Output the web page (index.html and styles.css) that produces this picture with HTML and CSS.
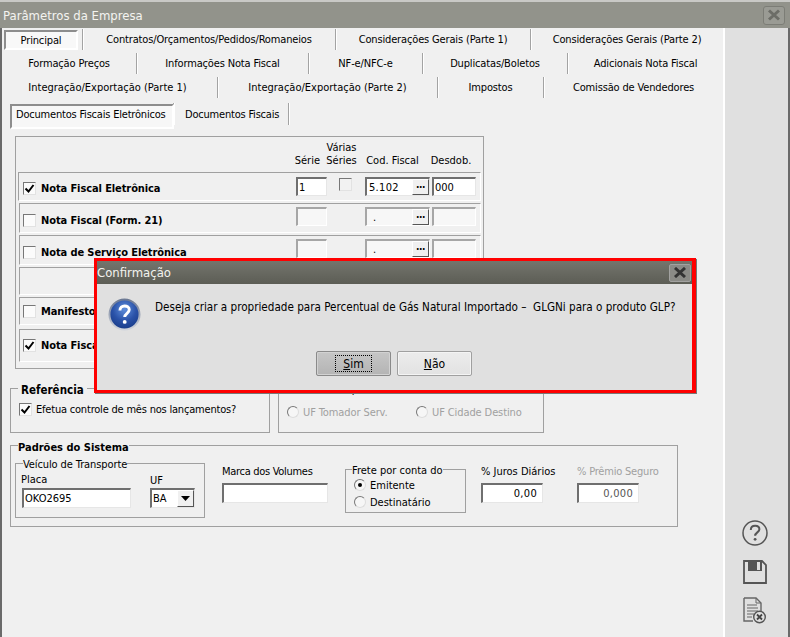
FILE: index.html
```html
<!DOCTYPE html>
<html lang="pt-BR">
<head>
<meta charset="utf-8">
<title>Parâmetros da Empresa</title>
<link rel="stylesheet" href="styles.css">
</head>
<body>
<div class="app">
  <div class="topline"></div>
  <header class="titlebar">
    <span class="title">Parâmetros da Empresa</span>
    <span class="winclose"><svg width="14" height="12" viewBox="0 0 14 12"><path d="M2 1.500l10 9M12 1.500l-10 9" stroke="#6c6d67" stroke-width="3" fill="none"/></svg></span>
  </header>
  <div class="main">
    <div class="content">
      <nav class="tabrow r1">
        <div class="tab on"><span>Principal</span></div>
        <div class="tab">Contratos/Orçamentos/Pedidos/Romaneios</div>
        <div class="tab">Considerações Gerais (Parte 1)</div>
        <div class="tab">Considerações Gerais (Parte 2)</div>
      </nav>
      <nav class="tabrow r2">
        <div class="tab">Formação Preços</div>
        <div class="tab">Informações Nota Fiscal</div>
        <div class="tab">NF-e/NFC-e</div>
        <div class="tab">Duplicatas/Boletos</div>
        <div class="tab">Adicionais Nota Fiscal</div>
      </nav>
      <nav class="tabrow r3">
        <div class="tab">Integração/Exportação (Parte 1)</div>
        <div class="tab">Integração/Exportação (Parte 2)</div>
        <div class="tab">Impostos</div>
        <div class="tab">Comissão de Vendedores</div>
      </nav>
      <nav class="subtabs">
        <div class="subtab on">Documentos Fiscais Eletrônicos</div>
        <div class="subtab plain">Documentos Fiscais</div>
      </nav>

      <section class="docs">
        <div class="dochead">
          <span class="h-serie">Série</span>
          <span class="h-varias">Várias<br>Séries</span>
          <span class="h-cod">Cod. Fiscal</span>
          <span class="h-des">Desdob.</span>
        </div>
        <div class="docrow first">
          <span class="check"><svg width="11" height="11" viewBox="0 0 11 11"><path d="M1.500 5.500l3 3 5-6.500" stroke="#000" stroke-width="2" fill="none"/></svg></span>
          <b class="doclabel">Nota Fiscal Eletrônica</b>
          <span class="field active">1</span>
          <span class="gap"></span>
          <span class="check small"></span>
          <span class="gap"></span>
          <span class="field active cod">5.102<i class="dots">···</i></span>
          <span class="gap"></span>
          <span class="field active">000</span>
        </div>
        <div class="docrow tall">
          <span class="check"></span>
          <b class="doclabel">Nota Fiscal (Form. 21)</b>
          <span class="field"></span>
          <span class="gap"></span>
          <span class="gap"></span>
          <span class="gap"></span>
          <span class="field cod"><em>.</em><i class="dots">···</i></span>
          <span class="gap"></span>
          <span class="field"></span>
        </div>
        <div class="docrow tall">
          <span class="check"></span>
          <b class="doclabel">Nota de Serviço Eletrônica</b>
          <span class="field"></span>
          <span class="gap"></span>
          <span class="gap"></span>
          <span class="gap"></span>
          <span class="field cod"><em>.</em><i class="dots">···</i></span>
          <span class="gap"></span>
          <span class="field"></span>
        </div>
        <div class="docrow blank"></div>
        <div class="docrow plainrow">
          <span class="check"></span>
          <b class="doclabel">Manifesto Eletrônico</b>
        </div>
        <div class="docrow last">
          <span class="check"><svg width="11" height="11" viewBox="0 0 11 11"><path d="M1.500 5.500l3 3 5-6.500" stroke="#000" stroke-width="2" fill="none"/></svg></span>
          <b class="doclabel">Nota Fiscal de Consumidor</b>
        </div>
      </section>

      <div class="midrow">
        <fieldset class="ref">
          <legend>Referência</legend>
          <label class="refline"><span class="check"><svg width="11" height="11" viewBox="0 0 11 11"><path d="M1.500 5.500l3 3 5-6.500" stroke="#000" stroke-width="2" fill="none"/></svg></span>Efetua controle de mês nos lançamentos?</label>
        </fieldset>
        <fieldset class="ufgroup">
          <legend>Local de Imposto</legend>
          <div class="ufline">
            <label class="opt dim"><span class="radio"></span>UF Tomador Serv.</label>
            <label class="opt dim"><span class="radio"></span>UF Cidade Destino</label>
          </div>
        </fieldset>
      </div>

      <fieldset class="padroes">
        <legend>Padrões do Sistema</legend>
        <div class="padrow">
          <fieldset class="veiculo">
            <legend>Veículo de Transporte</legend>
            <div class="vrow">
              <div class="vplaca"><span class="lbl">Placa</span><span class="field active placa">OKO2695</span></div>
              <div class="vuf"><span class="lbl">UF</span><span class="field active uf">BA<i class="drop"><svg width="9" height="5" viewBox="0 0 9 5"><path d="M0 0h9L4.500 5z" fill="#000"/></svg></i></span></div>
            </div>
          </fieldset>
          <div class="stack marca"><span class="lbl">Marca dos Volumes</span><span class="field active wide"></span></div>
          <fieldset class="frete">
            <legend>Frete por conta do</legend>
            <label class="opt o1"><span class="radio sel"></span>Emitente</label>
            <label class="opt o2"><span class="radio"></span>Destinatário</label>
          </fieldset>
          <div class="stack juros"><span class="lbl">% Juros Diários</span><span class="field active num">0,00</span></div>
          <div class="stack premio"><span class="lbl dimtext">% Prêmio Seguro</span><span class="field active num dimnum">0,000</span></div>
        </div>
      </fieldset>
    </div>
    <aside class="side">
      <svg class="ic-help" width="28" height="28" viewBox="0 0 28 28"><circle cx="14" cy="14" r="12" fill="none" stroke="#555" stroke-width="1.500"/><path d="M9.800 11c0-2.800 2-4.300 4.400-4.300s4.200 1.500 4.200 3.600c0 3-4.300 3.200-4.300 6.500" fill="none" stroke="#555" stroke-width="2"/><circle cx="14.100" cy="20.300" r="1.400" fill="#555"/></svg>
      <svg class="ic-save" width="26" height="26" viewBox="0 0 26 26"><path d="M2 2h18l4 4v18H2z" fill="none" stroke="#555" stroke-width="1.800"/><rect x="6" y="2" width="14" height="10" fill="#555"/><rect x="15" y="3" width="3" height="8" fill="#e0e0e0"/></svg>
      <svg class="ic-doc" width="26" height="28" viewBox="0 0 26 28"><path d="M2 1h12l5 5v10M2 1v23h9" fill="none" stroke="#666" stroke-width="1.400"/><path d="M5 8h10M5 11h11M5 14h11M5 17h7M5 20h5" stroke="#666" stroke-width="1.200"/><path d="M14 1v5h5" fill="none" stroke="#666"/><circle cx="17.500" cy="20" r="5.800" fill="#e0e0e0" stroke="#555" stroke-width="1.400"/><path d="M15 17.500l5 5M20 17.500l-5 5" stroke="#444" stroke-width="1.800"/></svg>
    </aside>
  </div>

  <div class="dialog">
    <div class="dlgtitle">
      <span class="dlgtext">Confirmação</span>
      <span class="dlgclose"><svg width="14" height="11" viewBox="0 0 14 11"><path d="M2 1l10 9M12 1l-10 9" stroke="#333" stroke-width="3" fill="none"/></svg></span>
    </div>
    <div class="dlgbody">
      <div class="dlgmsg">
        <svg class="qicon" width="33" height="33" viewBox="0 0 34 34">
          <defs>
            <radialGradient id="qb" cx="50%" cy="32%" r="70%"><stop offset="0" stop-color="#5f8fdc"/><stop offset="0.55" stop-color="#2a52a8"/><stop offset="1" stop-color="#173a86"/></radialGradient>
            <linearGradient id="qr" x1="0" y1="0" x2="0" y2="1"><stop offset="0" stop-color="#6d7a94"/><stop offset="1" stop-color="#d0d4dc"/></linearGradient>
          </defs>
          <circle cx="17" cy="17" r="15.500" fill="url(#qb)" stroke="url(#qr)" stroke-width="2"/>
          <path d="M12.300 13c0-3.200 2.200-4.800 4.800-4.800s4.800 1.500 4.800 4c0 3.600-4.700 3.600-4.700 7.500" fill="none" stroke="#fff" stroke-width="3"/>
          <circle cx="17.200" cy="24.600" r="2" fill="#fff"/>
        </svg>
        <p>Deseja criar a propriedade para Percentual de Gás Natural Importado –&nbsp; GLGNi para o produto GLP?</p>
      </div>
      <div class="dlgbtns">
        <button class="btn def" type="button"><span><u>S</u>im</span></button>
        <button class="btn" type="button"><span><u>N</u>ão</span></button>
      </div>
    </div>
  </div>
</div>
</body>
</html>
```
FILE: styles.css
```css
* { box-sizing: border-box; }
html, body { margin: 0; padding: 0; }
body {
  width: 790px;
  height: 637px;
  overflow: hidden;
  font-family: "DejaVu Sans Condensed", "DejaVu Sans", sans-serif;
  font-size: 11px;
  color: #000;
  background: #f0f0f0;
}
.app { position: relative; width: 790px; height: 637px; display: flex; flex-direction: column; overflow: hidden; }
.topline { height: 2px; background: #c9c9c6; flex: none; }
.titlebar {
  height: 26px; flex: none; background: #92938b; display: flex; align-items: center;
  justify-content: space-between; padding: 0 5px 0 3px; color: #f4f4f0;
}
.title { font-size: 13px; }
.winclose {
  width: 22px; height: 19px; border: 1px solid #7c7d76; border-radius: 3px; background: #9a9b94;
  display: flex; align-items: center; justify-content: center;
}
.main {
  flex: 1; display: flex; border-left: 2px solid #6a6a6a; border-right: 2px solid #6a6a6a; min-height: 0;
}
.content { width: 722px; flex: none; background: #f0f0f0; border-right: 1px solid #fff; }
.side { flex: 1; background: #e0e0e0; border-left: 1px solid #fff; display: flex; flex-direction: column; align-items: center; padding: 491px 4px 0 0; }
.ic-save { margin-top: 12px; }
.ic-doc { margin-top: 12px; }

.tabrow { display: grid; height: 24px; padding-top: 1px; }
.r1 { grid-template-columns: 81px 253px 195px 192px; }
.r2 { grid-template-columns: 135px 172px 114px 145px 155px; }
.r3 { grid-template-columns: 216px 220px 106px 179px; }
.tab {
  height: 21px; display: flex; align-items: center; justify-content: center; letter-spacing: -0.15px;
  border-right: 1px solid #a3a3a3; box-shadow: 1px 0 0 #fff; white-space: nowrap;
}
.r3 .tab:nth-child(-n+2) { letter-spacing: 0; }
.r3 .tab:first-child { padding-right: 4px; }
.tab:last-child { border-right: 0; box-shadow: none; }
.tab.on { padding: 1px 4px 0 2px; }
.tab.on span {
  display: flex; align-items: center; justify-content: center; width: 74px; height: 20px; padding-top: 1px;
  background: #f8f8f8; border: 2px solid; border-color: #8d8d8d #fff #fff #8d8d8d;
}

.subtabs { display: flex; height: 22px; margin-top: 3px; padding-left: 8px; }
.subtab { display: flex; align-items: center; white-space: nowrap; border-right: 1px solid #a3a3a3; box-shadow: 1px 0 0 #fff; letter-spacing: -0.2px; }
.subtab.on { width: 164px; padding: 1px 0 0 6px; position: relative; isolation: isolate; }
.subtab.plain { width: 115px; padding-left: 11px; }
.subtab.on::before {
  content: ""; position: absolute; left: 0; top: 1px; width: 160px; height: 21px; background: #f7f7f7;
  border: 2px solid; border-color: #8d8d8d #fff #fff #8d8d8d; z-index: -1;
}

.docs {
  margin: 11px 0 0 13px; width: 469px; height: 233px; border: 1px solid #a0a0a0; padding: 0 2px 0 3px;
}
.dochead { height: 35px; display: grid; grid-template-columns: 255px 31px 37px 65px 4px 44px; padding-left: 18px; align-items: end; text-align: center; line-height: 13px; padding-bottom: 5px; }
.h-serie { grid-column: 1 / 3; text-align: right; padding-right: 3px; }
.h-varias { grid-column: 3; }
.h-cod { grid-column: 4; }
.h-des { grid-column: 6; }
.dochead span { white-space: nowrap; }
.docrow {
  height: 29px; margin-bottom: 2px; border: 1px solid #a0a0a0; border-right-color: #fff; border-bottom-color: #fff;
  display: grid; grid-template-columns: 18px 255px 31px 12px 13px 13px 65px 2px 44px; padding-left: 3px; align-items: center;
}
.docrow.first { margin-left: -1px; padding-left: 4px; }
.docrow.tall { height: 30px; }
.docrow.tall .field { margin-bottom: 3px; }
.docrow.first > .check:first-child, .docrow.first .doclabel,
.docrow.tall .check, .docrow.tall .doclabel { margin-top: 4px; }
.docrow.blank { height: 28px; }
.docrow.plainrow { height: 28px; }
.docrow.last { height: 33px; margin-top: 4px; }
.check {
  width: 13px; height: 13px; background: #fbfbfb; border: 1px solid; border-color: #777 #e2e2e2 #e2e2e2 #777;
  display: inline-flex; align-items: center; justify-content: center; flex: none;
}
.check.small { background: #f2f2f2; margin-bottom: 4px; }
.doclabel { font-weight: bold; letter-spacing: -0.1px; white-space: nowrap; font-size: 11px; }
.field {
  height: 19px; background: #f7f7f7; border-style: solid; border-width: 2px 1px 1px 2px; border-color: #a6a6a6 #fff #fff #a6a6a6;
  display: flex; align-items: center; position: relative; padding-left: 2px; white-space: nowrap;
}
.field.active { background: #fff; border-color: #6f6f6f #e6e6e6 #e6e6e6 #6f6f6f; padding-left: 1px; }
.field.cod { letter-spacing: 0.3px; padding-left: 2px; }
.field em { font-style: normal; padding-left: 4px; }
.dots {
  position: absolute; right: 0; top: 0; bottom: 0; width: 17px; background: #f0f0f0; font-style: normal; font-weight: bold; letter-spacing: -0.5px;
  display: flex; align-items: center; justify-content: center; border: 1px solid; border-color: #fff #555 #555 #fff; font-size: 10px;
}

.midrow { display: flex; gap: 8px; margin: 10px 0 0 8px; height: 54px; }
fieldset { margin: 0; padding: 0; border: 1px solid #a0a0a0; min-width: 0; }
legend { padding: 0; white-space: nowrap; line-height: 14px; }
.ref { width: 260px; height: 54px; padding: 0 0 0 8px; }
.ref legend { font-weight: bold; font-size: 11.500px; margin-left: -1px; padding: 4px 3px 0; }
.refline { display: flex; align-items: center; gap: 4px; margin-top: 6px; white-space: nowrap; letter-spacing: -0.2px; }
.ufgroup { width: 266px; height: 54px; padding: 0 0 0 8px; }
.ufgroup legend { margin-left: 6px; padding: 4px 2px 0; }
.ufline { display: flex; gap: 9px; margin-top: 7px; }
.opt { display: flex; align-items: center; gap: 4px; white-space: nowrap; height: 16px; }
.opt.dim { color: #a0a0a0; width: 120px; letter-spacing: -0.1px; }
.radio {
  width: 12px; height: 12px; border-radius: 50%; background: #f6f6f6; border: 1px solid; border-color: #777 #ddd #ddd #777;
  display: inline-flex; align-items: center; justify-content: center; flex: none;
}
.radio.sel::after { content: ""; width: 4px; height: 4px; border-radius: 50%; background: #000; }

.padroes { margin: 2px 0 0 8px; width: 668px; height: 92px; padding: 0 0 0 4px; }
.padroes > legend { font-weight: bold; font-size: 11px; margin-left: 3px; padding-top: 6px; }
.padrow { display: flex; align-items: flex-start; margin-top: -1px; }
.veiculo { width: 190px; height: 64px; padding: 0 0 0 5px; flex: none; }
.veiculo legend { margin-left: 2px; letter-spacing: -0.1px; padding-top: 4px; }
.vrow { display: flex; margin-top: 1px; }
.vplaca, .vuf, .stack { display: flex; flex-direction: column; }
.vplaca { width: 129px; }
.vuf { margin-top: 1px; }
.lbl { line-height: 14px; white-space: nowrap; }
.placa { width: 109px; height: 20px; margin: 1px 0 0 1px; }
.uf { width: 45px; height: 20px; }
.drop {
  position: absolute; right: 0; top: 0; bottom: 0; width: 17px; background: #f0f0f0;
  display: flex; align-items: center; justify-content: center; border: 1px solid; border-color: #fff #555 #555 #fff;
}
.stack { margin-top: 11px; gap: 4px; flex: none; }
.marca { margin-left: 17px; width: 123px; }
.marca .lbl { letter-spacing: -0.3px; }
.wide { width: 106px; height: 20px; }
.frete { width: 121px; height: 53px; margin: 6px 0 0 0; padding: 0 0 0 8px; flex: none; }
.frete legend { margin-left: -2px; padding-top: 4px; }
.o1 { margin-top: -1px; }
.o2 { margin-top: 1px; }
.juros { margin-left: 15px; width: 96px; }
.premio .lbl { letter-spacing: -0.2px; }
.num { width: 62px; height: 20px; justify-content: flex-end; padding-right: 5px; letter-spacing: 0.3px; }
.dimtext { color: #a0a0a0; }
.dimnum { color: #555; }

.dialog {
  position: absolute; left: 94px; top: 258px; width: 602px; height: 135px; border: 3px solid #f00;
  border-right-width: 4px; box-shadow: 1px 1px 0 #777; background: #e0e0e0; display: flex; flex-direction: column;
}
.dlgtitle {
  height: 23px; flex: none; background: linear-gradient(#74756d, #5c5d55); color: #f2f2ee; display: flex; align-items: center;
  justify-content: space-between; padding: 0 1px 0 0; font-size: 13px;
}
.dlgtext { padding-bottom: 1px; }
.dlgclose {
  width: 22px; height: 18px; background: #8a8a86; border: 1px solid #a2a2a0; border-radius: 2px;
  display: flex; align-items: center; justify-content: center;
}
.dlgbody { flex: 1; padding: 15px 0 0 11px; }
.dlgmsg { display: flex; align-items: flex-start; gap: 14px; height: 52px; }
.qicon { flex: none; margin-top: -1px; }
.dlgmsg p { margin: 0; font-size: 11.600px; line-height: 16px; white-space: nowrap; }
.dlgbtns { display: flex; gap: 6px; padding-left: 208px; }
.btn {
  width: 75px; height: 25px; padding: 0; font: inherit; font-size: 12px; color: #000;
  border: 1px solid #a0a0a0; border-radius: 2px; background: linear-gradient(#ececec, #e2e2e2); box-shadow: inset 0 0 0 1px #f4f4f4;
  display: flex; align-items: center; justify-content: center;
}
.btn.def { background: linear-gradient(#c6c6c6, #b4b4b4); border-color: #8a8a8a; box-shadow: inset 0 0 0 1px #d2d2d2; }
.btn.def span { width: 37px; height: 17px; border: 1px dotted #000; display: flex; align-items: center; justify-content: center; }
```
